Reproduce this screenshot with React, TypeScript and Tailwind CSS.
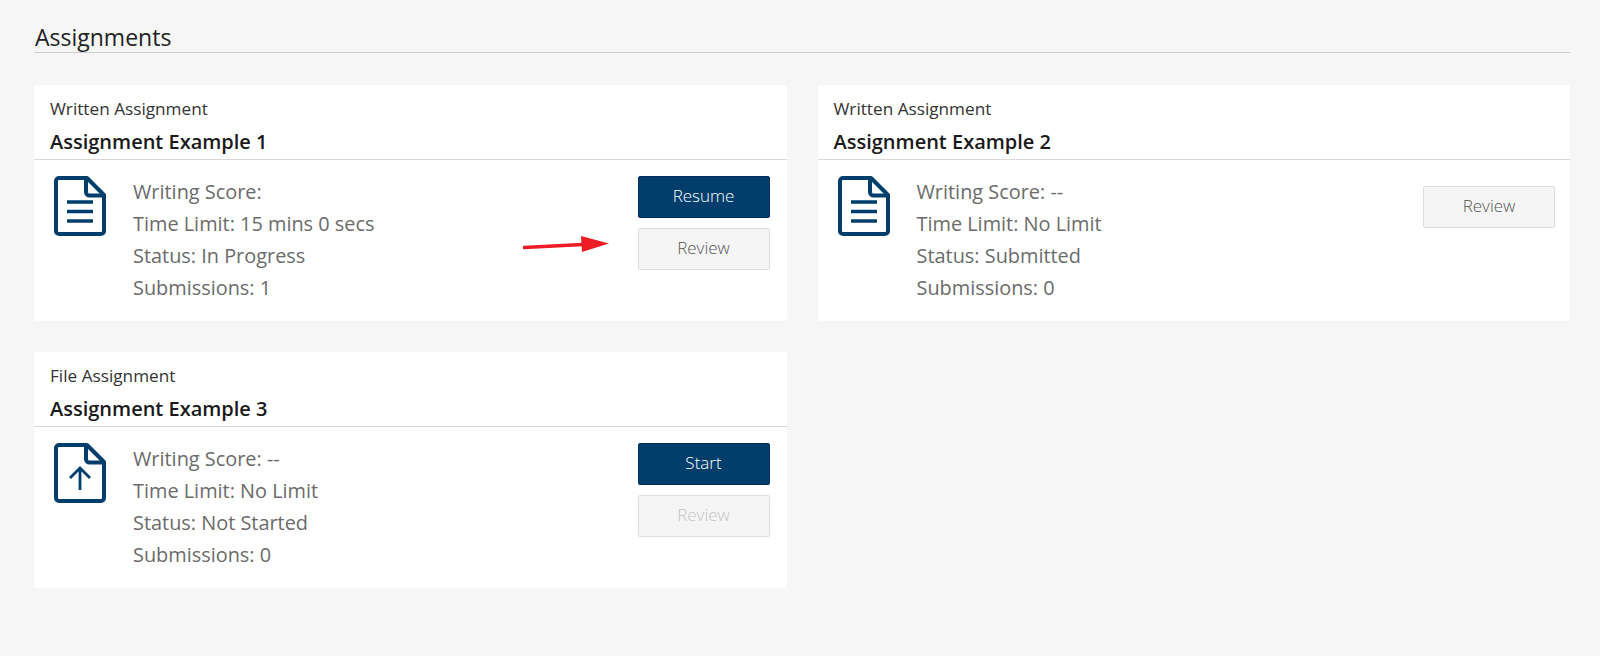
import type { ReactNode } from 'react';

type Assignment = {
  kind: string;
  title: string;
  score: string;
  limit: string;
  status: string;
  submissions: number;
  icon: 'doc' | 'upload';
  primary?: string;
  reviewDisabled?: boolean;
  centerReview?: boolean;
  arrow?: boolean;
};

const assignments: Assignment[] = [
  { kind: 'Written Assignment', title: 'Assignment Example 1', score: '', limit: '15 mins 0 secs', status: 'In Progress', submissions: 1, icon: 'doc', primary: 'Resume', arrow: true },
  { kind: 'Written Assignment', title: 'Assignment Example 2', score: '--', limit: 'No Limit', status: 'Submitted', submissions: 0, icon: 'doc', centerReview: true },
  { kind: 'File Assignment', title: 'Assignment Example 3', score: '--', limit: 'No Limit', status: 'Not Started', submissions: 0, icon: 'upload', primary: 'Start', reviewDisabled: true },
];

function FileIcon({ children }: { children: ReactNode }) {
  return (
    <svg width="52" height="60" viewBox="0 0 52 60" fill="none" stroke="#023e6c" className="shrink-0">
      <path d="M5 2H33L50 19V55a3 3 0 0 1-3 3H5A3 3 0 0 1 2 55V5A3 3 0 0 1 5 2Z" strokeWidth="4" strokeLinejoin="round" />
      <path d="M32 2V16a3.5 3.5 0 0 0 3.5 3.5H50" strokeWidth="4" />
      {children}
    </svg>
  );
}

function AssignmentCard({ item }: { item: Assignment }) {
  return (
    <div className="relative bg-white rounded-[2px] h-[236px]">
      <div className="h-[75px] px-4 pt-[12px] border-b border-[#d9d9d9]">
        <div className="text-[17.2px] leading-[24px] text-[#333]">{item.kind}</div>
        <div className="mt-[8px] text-[20px] leading-[26px] font-semibold text-[#1a1a1a]">{item.title}</div>
      </div>
      <div className={`flex pl-5 pt-4 ${item.centerReview ? 'pr-[15px]' : 'pr-[17px]'}`}>
        {item.icon === 'doc' ? (
          <FileIcon>
            <path d="M13 26H39M13 35.5H39M13 45H39" strokeWidth="3.5" />
          </FileIcon>
        ) : (
          <FileIcon>
            <path d="M26 47V25M16 35L26 25L36 35" strokeWidth="2.8" />
          </FileIcon>
        )}
        <div className="ml-[27px] flex-1 text-[19.9px] leading-[32px] text-[#6b6b6b]">
          <div>Writing Score: {item.score}</div>
          <div>Time Limit: {item.limit}</div>
          <div>Status: {item.status}</div>
          <div>Submissions: {item.submissions}</div>
        </div>
        <div className={`w-[132px] flex flex-col gap-[10px] ${item.centerReview ? 'pt-[10px]' : ''}`}>
          {item.primary && (
            <button className="h-[42px] pb-[3px] rounded-[2px] bg-[#023e6c] border border-[#012f5a] text-white text-[17px] font-light">
              {item.primary}
            </button>
          )}
          <button className={`h-[42px] pb-[3px] rounded-[2px] bg-[#f5f5f5] border border-[#dedede] text-[17px] font-light ${item.reviewDisabled ? 'text-[#c4c4c4]' : 'text-[#555]'}`}>
            Review
          </button>
        </div>
      </div>
      {item.arrow && (
        <svg width="88" height="22" viewBox="0 0 88 22" className="absolute left-[489px] top-[149px]">
          <path d="M1 13.5L60 10.5" stroke="#ee1c25" strokeWidth="3.5" strokeLinecap="round" />
          <path d="M58 2L86 9.5L59 18Z" fill="#ee1c25" />
        </svg>
      )}
    </div>
  );
}

export default function App() {
  return (
    <div className="min-h-[656px] bg-[#f6f6f6] pl-[34px] pr-[30px] pt-[20px] font-['Open_Sans',sans-serif]">
      <h2 className="h-[33px] pt-[1px] pl-[1px] text-[23px] leading-[32px] text-[#222] border-b border-[#cfcfcf]">Assignments</h2>
      <div className="mt-[32px] grid grid-cols-2 gap-x-[31px] gap-y-[31px]">
        {assignments.map((a) => (
          <AssignmentCard key={a.title} item={a} />
        ))}
      </div>
    </div>
  );
}
